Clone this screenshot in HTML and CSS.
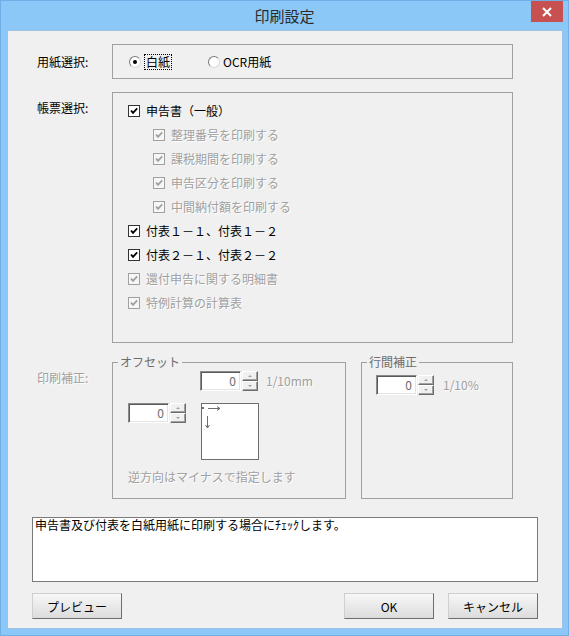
FILE: index.html
```html
<!DOCTYPE html>
<html lang="ja">
<head>
    <meta charset="utf-8">
    <title>印刷設定</title>
    <link rel="stylesheet" href="styles.css">
</head>
<body>
<div class="window">
    <!-- Title bar -->
    <div class="titlebar">
        <span class="title">印刷設定</span>
        <span class="close">
            <svg width="10" height="10" viewBox="0 0 10 10"><path d="M1 1 L9 9 M9 1 L1 9" stroke="#fff" stroke-width="2"/></svg>
        </span>
    </div>

    <div class="content">
        <!-- Paper selection -->
        <div class="row">
            <span class="label">用紙選択:</span>
            <div class="group paper-group">
                <label class="radio"><span class="dot on"></span><span class="focus">白紙</span></label>
                <label class="radio second"><span class="dot"></span>OCR用紙</label>
            </div>
        </div>

        <!-- Form selection -->
        <div class="row row-top">
            <span class="label label-forms">帳票選択:</span>
            <div class="group forms-group">
                <div class="check"><span class="cb"><svg viewBox="0 0 10 10"><polyline points="2,4.5 4,6.8 8.2,2.4"/></svg></span>申告書（一般）</div>
                <div class="check sub off"><span class="cb"><svg viewBox="0 0 10 10"><polyline points="2,4.5 4,6.8 8.2,2.4"/></svg></span>整理番号を印刷する</div>
                <div class="check sub off"><span class="cb"><svg viewBox="0 0 10 10"><polyline points="2,4.5 4,6.8 8.2,2.4"/></svg></span>課税期間を印刷する</div>
                <div class="check sub off"><span class="cb"><svg viewBox="0 0 10 10"><polyline points="2,4.5 4,6.8 8.2,2.4"/></svg></span>申告区分を印刷する</div>
                <div class="check sub off"><span class="cb"><svg viewBox="0 0 10 10"><polyline points="2,4.5 4,6.8 8.2,2.4"/></svg></span>中間納付額を印刷する</div>
                <div class="check"><span class="cb"><svg viewBox="0 0 10 10"><polyline points="2,4.5 4,6.8 8.2,2.4"/></svg></span>付表１－１、付表１－２</div>
                <div class="check"><span class="cb"><svg viewBox="0 0 10 10"><polyline points="2,4.5 4,6.8 8.2,2.4"/></svg></span>付表２－１、付表２－２</div>
                <div class="check off"><span class="cb"><svg viewBox="0 0 10 10"><polyline points="2,4.5 4,6.8 8.2,2.4"/></svg></span>還付申告に関する明細書</div>
                <div class="check off"><span class="cb"><svg viewBox="0 0 10 10"><polyline points="2,4.5 4,6.8 8.2,2.4"/></svg></span>特例計算の計算表</div>
            </div>
        </div>

        <!-- Print adjustment (disabled) -->
        <div class="row row-top row-adjust">
            <span class="label label-adjust off">印刷補正:</span>
            <fieldset class="offset">
                <legend>オフセット</legend>
                <div class="offset-body">
                    <div class="offset-top">
                        <div class="spin">
                            <span class="spin-input">0</span>
                            <span class="spin-btns"><span class="spin-btn"><i class="up"></i></span><span class="spin-btn"><i class="down"></i></span></span>
                        </div>
                        <span class="unit off">1/10mm</span>
                    </div>
                    <div class="offset-mid">
                        <div class="spin">
                            <span class="spin-input">0</span>
                            <span class="spin-btns"><span class="spin-btn"><i class="up"></i></span><span class="spin-btn"><i class="down"></i></span></span>
                        </div>
                        <svg class="diagram" width="58" height="57" viewBox="0 0 58 57">
                            <rect x="0.5" y="0.5" width="57" height="56" fill="#fff" stroke="#6d6d6d"/>
                            <rect x="1" y="4" width="2" height="2" fill="#6d6d6d"/>
                            <path d="M7 5.5 H19 M16 3.5 L19 5.5 L16 7.5" stroke="#6d6d6d" fill="none"/>
                            <path d="M6.5 13 V25 M4.5 22 L6.5 25 L8.5 22" stroke="#6d6d6d" fill="none"/>
                        </svg>
                    </div>
                    <p class="note off">逆方向はマイナスで指定します</p>
                </div>
            </fieldset>
            <fieldset class="linegap">
                <legend>行間補正</legend>
                <div class="linegap-row">
                    <div class="spin">
                        <span class="spin-input">0</span>
                        <span class="spin-btns"><span class="spin-btn"><i class="up"></i></span><span class="spin-btn"><i class="down"></i></span></span>
                    </div>
                    <span class="unit unit-gap off">1/10%</span>
                </div>
            </fieldset>
        </div>

        <!-- Help text -->
        <div class="desc">申告書及び付表を白紙用紙に印刷する場合にﾁｪｯｸします。</div>

        <!-- Dialog buttons -->
        <div class="buttons">
            <button class="btn">プレビュー</button>
            <span class="spacer"></span>
            <button class="btn">OK</button>
            <button class="btn">キャンセル</button>
        </div>
    </div>
</div>
</body>
</html>
```

FILE: styles.css
```css
/* Dialog window frame */
body {
    margin: 0;
    font-family: "Noto Sans CJK JP", "Noto Sans", sans-serif;
}

.window {
    width: 569px;
    height: 636px;
    box-sizing: border-box;
    background-color: #8bc7f7;
    border: 1px solid #71aee6;
    display: flex;
    flex-direction: column;
}

/* Title bar */
.titlebar {
    height: 29px;
    display: grid;
    grid-template-columns: 1fr auto 1fr;
}

.title {
    grid-column: 2;
    font-size: 15px;
    line-height: 29px;
    color: #2b2b2b;
}

.close {
    grid-column: 3;
    justify-self: end;
    width: 32px;
    height: 21px;
    margin-right: 5px;
    background-color: #c75050;
    display: flex;
    align-items: center;
    justify-content: center;
}

/* Client area */
.content {
    flex: 1;
    margin: 0 5px 6px 6px;
    box-sizing: border-box;
    border: 1px solid #9dc2e4;
    background-color: #f0f0f0;
    font-size: 12px;
    line-height: 14px;
    color: #000;
}

.row {
    display: flex;
    align-items: center;
    padding-left: 29px;
    margin-top: 13px;
}

.row-top {
    align-items: flex-start;
}

.row-adjust {
    margin-top: 12px;
}

.label {
    width: 75px;
    flex-shrink: 0;
}

.label-forms {
    padding-top: 9px;
}

.label-adjust {
    padding-top: 16px;
}

.off {
    color: #a0a0a0;
    text-shadow: 1px 1px 0 #fff;
}

/* Group boxes */
.group {
    box-sizing: border-box;
    width: 401px;
    border: 1px solid #a0a0a0;
}

.paper-group {
    height: 35px;
    display: flex;
    align-items: center;
    padding-left: 16px;
}

.radio {
    display: flex;
    align-items: center;
    gap: 3px;
}

.radio.second {
    margin-left: 36px;
}

.dot {
    width: 12px;
    height: 12px;
    box-sizing: border-box;
    border-radius: 50%;
    border: 1px solid;
    border-color: #7a7a7a #d8d8d8 #d8d8d8 #7a7a7a;
    background-color: #fff;
    display: flex;
    align-items: center;
    justify-content: center;
}

.dot.on::after {
    content: "";
    width: 4px;
    height: 4px;
    border-radius: 50%;
    background-color: #000;
}

.focus {
    border: 1px dotted #000;
    padding: 0 1px;
}

.forms-group {
    height: 251px;
    padding: 6px 0 0 15px;
}

.check {
    display: flex;
    align-items: center;
    gap: 6px;
    height: 24px;
}

.check.sub {
    padding-left: 25px;
}

.cb {
    width: 12px;
    height: 12px;
    box-sizing: border-box;
    border: 1px solid #333;
    background-color: #fff;
    display: flex;
}

.cb svg {
    width: 10px;
    height: 10px;
}

.cb polyline {
    fill: none;
    stroke: #000;
    stroke-width: 1.8;
}

.check.off .cb {
    border-color: #a0a0a0;
    background-color: #f6f6f6;
}

.check.off .cb polyline {
    stroke: #a0a0a0;
}

/* Disabled adjustment frames */
fieldset {
    margin: 0;
    padding: 0;
    min-width: 0;
    box-sizing: border-box;
    height: 144px;
    border: 1px solid #a0a0a0;
}

legend {
    margin-left: 5px;
    padding: 0 2px;
    color: #6d6d6d;
    line-height: 14px;
}

.offset {
    width: 234px;
}

.offset-body {
    padding-left: 15px;
}

.offset-top {
    display: flex;
    align-items: center;
    margin: 2px 0 0 72px;
}

.unit {
    margin-left: 8px;
}

.unit-gap {
    margin-left: 9px;
}

.offset-mid {
    display: flex;
    align-items: flex-start;
    gap: 15px;
    margin-top: 12px;
}

.diagram {
    display: block;
}

.note {
    margin: 10px 0 0;
}

.linegap {
    width: 152px;
    margin-left: 15px;
}

.linegap-row {
    display: flex;
    align-items: center;
    margin: 6px 0 0 14px;
}

/* Spin box */
.spin {
    display: flex;
    gap: 1px;
}

.spin-input {
    width: 41px;
    height: 20px;
    box-sizing: border-box;
    border: 1px solid;
    border-color: #8a8a8a #fff #fff #8a8a8a;
    box-shadow: inset 1px 1px 0 #5a5a5a, inset -1px -1px 0 #e3e3e3;
    background-color: #fff;
    text-align: right;
    padding-right: 4px;
    line-height: 17px;
    color: #6d6d6d;
}

.spin-btns {
    display: flex;
    flex-direction: column;
}

.spin-btn {
    width: 16px;
    height: 10px;
    box-sizing: border-box;
    border: 1px solid;
    border-color: #fff #6d6d6d #6d6d6d #fff;
    box-shadow: inset -1px -1px 0 #a0a0a0;
    background-color: #f0f0f0;
    display: flex;
    align-items: center;
    justify-content: center;
}

.spin-btn i {
    width: 0;
    height: 0;
    border-left: 2px solid transparent;
    border-right: 2px solid transparent;
}

.spin-btn i.up {
    border-bottom: 2px solid #a0a0a0;
}

.spin-btn i.down {
    border-top: 2px solid #a0a0a0;
}

/* Help text box */
.desc {
    box-sizing: border-box;
    width: 506px;
    height: 65px;
    margin: 18px 0 0 24px;
    padding: 0 2px;
    border: 1px solid #7a7a7a;
    background-color: #fff;
}

/* Buttons */
.buttons {
    display: flex;
    gap: 14px;
    margin-top: 11px;
    padding: 0 24px;
}

.spacer {
    flex: 1;
}

.btn {
    width: 90px;
    height: 26px;
    font-family: inherit;
    font-size: 12px;
    color: #000;
    border: 1px solid;
    border-color: #cfcfcf #6e6e6e #6e6e6e #cfcfcf;
    background: linear-gradient(#f7f7f7, #dcdcdc);
    padding: 0;
}
```
